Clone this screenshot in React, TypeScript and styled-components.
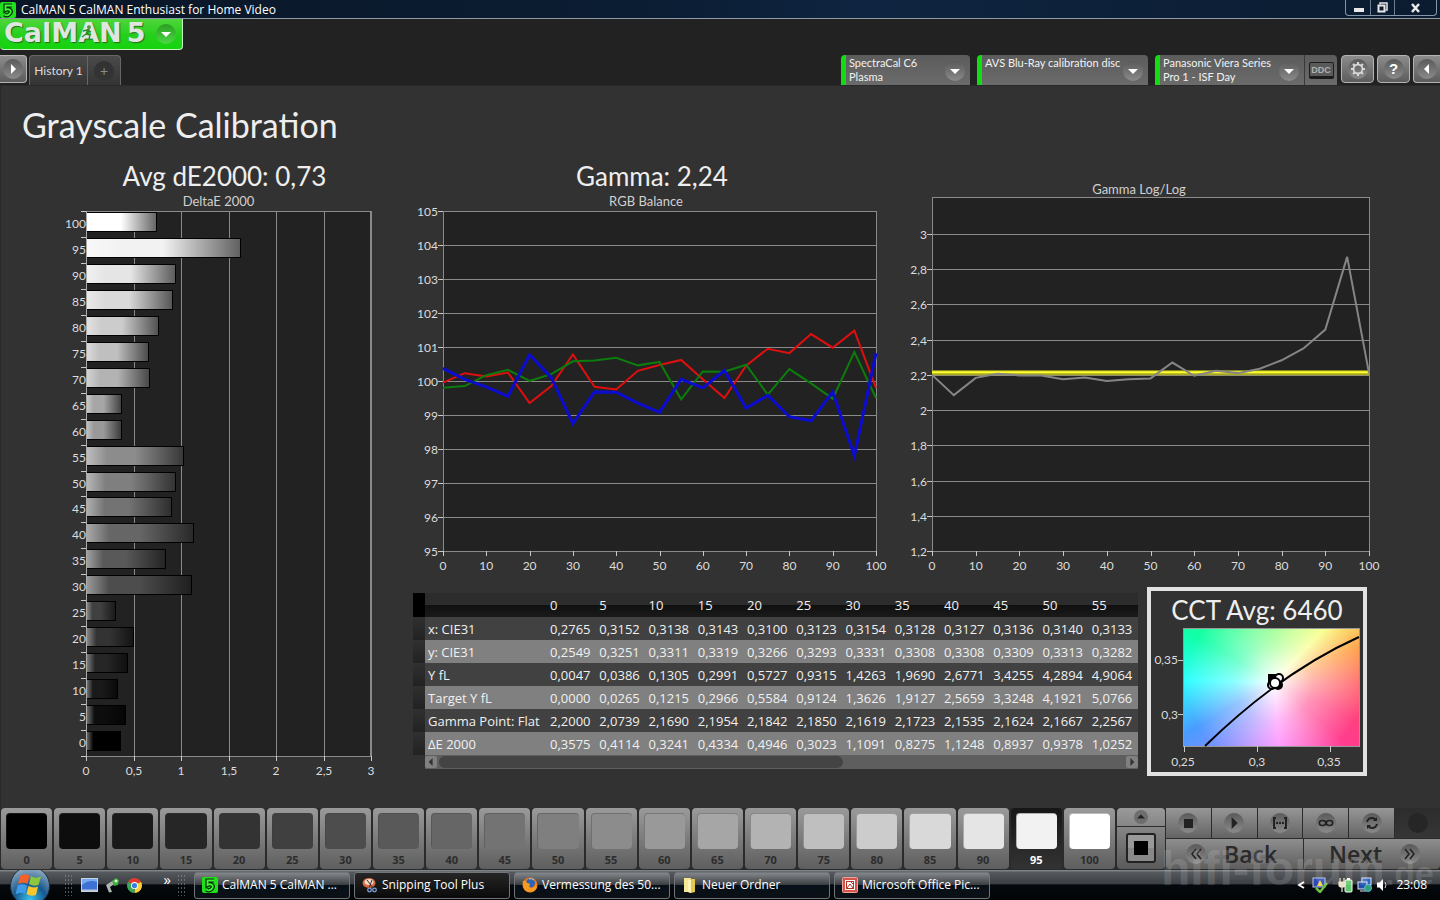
import React from "react";
import styled, { createGlobalStyle } from "styled-components";

const CALIBRI = `Lato, "Open Sans", sans-serif`;
const SEGOE = `"Open Sans", "Noto Sans", sans-serif`;

const GlobalStyle = createGlobalStyle`
  *, *::before, *::after { box-sizing: border-box; }
  body { margin: 0; background: #222; color: #eee; font-family: ${CALIBRI}; }
  button { font: inherit; color: inherit; border: 0; padding: 0; margin: 0; background: none; cursor: pointer; }
`;

/* ---------- data ---------- */

const LEVELS = Array.from({ length: 21 }, (_, i) => i * 5);

const DELTA_E = [
  0.3575, 0.4114, 0.3241, 0.4334, 0.4946, 0.3023, 1.1091, 0.8275, 1.1248, 0.8937, 0.9378,
  1.0252, 0.37, 0.37, 0.665, 0.655, 0.76, 0.9, 0.94, 1.625, 0.735,
];

const RED = [
  99.95, 100.23, 100.13, 100.25, 99.35, 99.85, 100.78, 99.83, 99.75, 100.3, 100.47, 100.62,
  100.05, 99.5, 100.45, 100.95, 100.82, 101.38, 100.98, 101.48, 99.8,
];
const GREEN = [
  99.8, 99.85, 100.17, 100.33, 100, 100.2, 100.58, 100.6, 100.68, 100.46, 100.56, 99.46,
  100.28, 100.27, 100.48, 99.6, 100.35, 99.93, 99.48, 100.85, 99.5,
];
const BLUE = [
  100.37, 100.05, 99.83, 99.55, 100.77, 100.1, 98.75, 99.68, 99.67, 99.35, 99.08, 100.05,
  99.8, 100.31, 99.2, 99.58, 98.95, 98.83, 99.68, 97.8, 100.82,
];
const GAMMA = [
  2.2, 2.085, 2.183, 2.207, 2.197, 2.197, 2.175, 2.185, 2.165, 2.175, 2.18, 2.27, 2.195,
  2.223, 2.21, 2.235, 2.283, 2.35, 2.457, 2.87, 2.21,
];

const TABLE_ROWS: { label: string; values: string[] }[] = [
  { label: "x: CIE31", values: "0,2765 0,3152 0,3138 0,3143 0,3100 0,3123 0,3154 0,3128 0,3127 0,3136 0,3140 0,3133".split(" ") },
  { label: "y: CIE31", values: "0,2549 0,3251 0,3311 0,3319 0,3266 0,3293 0,3331 0,3308 0,3308 0,3309 0,3313 0,3282".split(" ") },
  { label: "Y fL", values: "0,0047 0,0386 0,1305 0,2991 0,5727 0,9315 1,4263 1,9690 2,6771 3,4255 4,2894 4,9064".split(" ") },
  { label: "Target Y fL", values: "0,0000 0,0265 0,1215 0,2966 0,5584 0,9124 1,3626 1,9127 2,5659 3,3248 4,1921 5,0766".split(" ") },
  { label: "Gamma Point: Flat", values: "2,2000 2,0739 2,1690 2,1954 2,1842 2,1850 2,1619 2,1723 2,1535 2,1624 2,1667 2,2567".split(" ") },
  { label: "ΔE 2000", values: "0,3575 0,4114 0,3241 0,4334 0,4946 0,3023 1,1091 0,8275 1,1248 0,8937 0,9378 1,0252".split(" ") },
];

/* ---------- shell ---------- */

const Shell = styled.div`
  position: relative;
  min-height: 100vh;
  display: flex;
  flex-direction: column;
  overflow: hidden;
`;

const TitleBar = styled.header`
  height: 19px;
  display: flex;
  align-items: flex-start;
  justify-content: space-between;
  background: linear-gradient(90deg, #0a1626, #0b1d33 45%, #0e2440 60%, #0b1c30);
  border-bottom: 1px solid #8d9aa6;
`;
const AppName = styled.div`
  display: flex;
  align-items: center;
  gap: 5px;
  font: 12px/20px ${SEGOE};
  color: #fff;
`;
const WindowControls = styled.div`
  display: flex;
  height: 16px;
  margin-right: 3px;
  border: 1px solid #8496a8;
  border-top: 0;
  border-radius: 0 0 4px 4px;
`;
const WindowButton = styled.button`
  display: grid;
  place-items: center;
  width: 24px;
  & + & { border-left: 1px solid #6c7d8f; }
  & + & + & { width: 42px; }
`;

const Header = styled.div`
  height: 66px;
  background: #222;
  display: flex;
  flex-direction: column;
  justify-content: space-between;
`;
const LogoButton = styled.button`
  position: relative;
  display: flex;
  align-items: center;
  gap: 5px;
  align-self: flex-start;
  width: 183px;
  height: 31px;
  padding-left: 4px;
  background: linear-gradient(#50d63c, #24cf1c 55%, #14d40c);
  border: solid #c8f4c4;
  border-width: 0 1px 1px 0;
  border-radius: 0 0 4px 4px;
`;
const LogoText = styled.span`
  font: bold 27px/27px "DejaVu Sans", sans-serif;
  color: #dfe6df;
  text-shadow: 1px 1px 1px #2a6a22;
  padding-bottom: 3px;
`;
const Runner = styled.svg`
  position: absolute;
  left: 80px;
  top: 5px;
`;
const LogoArrow = styled.span`
  display: grid;
  place-items: center;
  width: 20px;
  height: 20px;
  margin-left: auto;
  margin-right: 6px;
  border-radius: 50%;
  background: linear-gradient(#2a9e22, #4cd844);
`;

const HeaderRow = styled.div`
  display: flex;
  align-items: flex-start;
  justify-content: space-between;
  height: 30px;
`;
const TabGroup = styled.div`
  display: flex;
  gap: 2px;
`;
const ToolButton = styled.button<{ $cut?: "left" | "right" }>`
  display: grid;
  place-items: center;
  width: ${(p) => (p.$cut ? 27 : 33)}px;
  height: 28px;
  background: linear-gradient(#8c8c8c, #5c5c5c);
  border: 1px solid #b4b4b4;
  border-left-width: ${(p) => (p.$cut === "left" ? 0 : 1)}px;
  border-right-width: ${(p) => (p.$cut === "right" ? 0 : 1)}px;
  border-radius: ${(p) => (p.$cut === "left" ? "0 4px 4px 0" : p.$cut === "right" ? "4px 0 0 4px" : "4px")};
`;
const Dimple = styled.span<{ $tone?: string; $size?: number }>`
  display: grid;
  place-items: center;
  flex: none;
  width: ${(p) => p.$size ?? 20}px;
  height: ${(p) => p.$size ?? 20}px;
  border-radius: 50%;
  background: ${(p) => p.$tone ?? "linear-gradient(#5a5a5a, #8a8a8a)"};
`;
const Tabs = styled.div`
  display: flex;
  height: 30px;
  width: 92px;
  background: linear-gradient(#4a4a4a, #343434);
  border: 1px solid #666;
  border-bottom: 0;
  border-radius: 4px 4px 0 0;
`;
const Tab = styled.button`
  width: 58px;
  font-size: 12px;
  color: #ddd;
  border-right: 1px solid #666;
`;
const AddTab = styled.button`
  flex: 1;
  display: grid;
  place-items: center;
`;
const Devices = styled.div`
  display: flex;
  align-items: flex-start;
  gap: 3px;
`;
const Device = styled.div<{ $width: number; $gap: number }>`
  display: flex;
  width: ${(p) => p.$width}px;
  height: 30px;
  margin-right: ${(p) => p.$gap}px;
  background: linear-gradient(#5c5c5c, #6b6b6b);
  border-radius: 4px 4px 0 0;
  border-left: 5px solid #12dc12;
  overflow: hidden;
`;
const DeviceButton = styled.button`
  flex: 1;
  display: flex;
  justify-content: space-between;
  align-items: flex-start;
  padding: 1px 5px 0 3px;
  font-size: 11px;
  line-height: 14px;
  text-align: left;
  white-space: pre;
  color: #f2f2f2;
  & > ${Dimple} { margin-top: 5px; }
`;
const DdcButton = styled.button`
  width: 33px;
  display: grid;
  place-items: center;
  border-left: 1px solid #3a3a3a;
`;
const DdcScreen = styled.span`
  width: 25px;
  height: 17px;
  font: bold 9px/14px "Liberation Sans", sans-serif;
  text-align: center;
  color: #b0b0b0;
  background: #5a5a5a;
  border: 1px solid #1c1c1c;
  border-bottom-width: 3px;
  border-radius: 2px;
`;

/* ---------- page ---------- */

const Page = styled.main`
  flex: 1;
  background: #323232;
  border: solid #292929;
  border-width: 1px 0 0 1px;
`;
const PageTitle = styled.h1`
  margin: 0;
  padding: 15px 21px 0;
  height: 74px;
  font-weight: 400;
  font-size: 34px;
  line-height: 48px;
`;
const Columns = styled.div`
  display: grid;
  grid-template-columns: 399fr 988fr 52fr;
`;
const ChartRow = styled.div`
  display: grid;
  grid-template-columns: 490fr 498fr;
  align-items: end;
`;
const Figure = styled.figure`
  margin: 0;
  display: flex;
  flex-direction: column;
`;
const Reading = styled.h2<{ $shift?: number }>`
  margin: 0;
  padding: 0 0 2px ${(p) => p.$shift ?? 0}px;
  font-weight: 400;
  font-size: 26px;
  line-height: 32px;
  text-align: center;
  white-space: nowrap;
`;
const Caption = styled.figcaption<{ $shift?: number }>`
  padding-left: ${(p) => p.$shift ?? 0}px;
  font-size: 13px;
  line-height: 15px;
  text-align: center;
  color: #d0d0d0;
`;
const Chart = styled.svg`
  display: block;
  width: 100%;
  height: auto;
  overflow: visible;
  font-family: ${CALIBRI};
  font-size: 12px;
  fill: #dcdcdc;
`;
const Results = styled.div`
  display: flex;
  align-items: flex-start;
  gap: 9px;
  padding: 10px 21px 0 13px;
`;
const DataPanel = styled.div`
  flex: 1;
  min-width: 0;
  margin-top: 6px;
`;
const DataTable = styled.table`
  width: 100%;
  table-layout: fixed;
  border-collapse: collapse;
  font: 13px/20px ${SEGOE};
  color: #f0f0f0;
  th, td { padding: 0 0 0 3px; text-align: left; font-weight: 400; white-space: nowrap; }
`;
const HeadRow = styled.tr`
  height: 24px;
  background: linear-gradient(#2c2c2c 50%, #101010 50%, #1a1a1a);
  td:first-child { background: #000; }
`;
const BodyRow = styled.tr`
  height: 23px;
  background: #414141;
  &:nth-child(even) { background: #808080; }
  td:first-child { background: linear-gradient(#303030, #222); }
`;
const StripCol = styled.col`width: 12px;`;
const LabelCol = styled.col`width: 122px;`;
const Scroller = styled.div`
  display: flex;
  align-items: center;
  height: 14px;
  margin-left: 12px;
  background: #5e5e5e;
`;
const ScrollButton = styled.button`
  width: 12px;
  height: 12px;
  display: grid;
  place-items: center;
  background: #808080;
  border-radius: 2px;
`;
const ScrollTrack = styled.div`
  flex: 1;
  padding: 0 2px;
`;
const ScrollThumb = styled.div`
  width: 59%;
  height: 12px;
  border-radius: 6px;
  background: #444;
`;
const CctPanel = styled.figure`
  margin: 0;
  flex: 0 0 220px;
  height: 189px;
  border: 4px solid #e2e2e2;
`;
const CctReading = styled(Reading)`
  padding-top: 3px;
  height: 36px;
`;
const Chromaticity = styled.div`
  height: 100%;
  background:
    radial-gradient(circle at 52% 46%, #fff, rgba(255, 255, 255, 0.45) 35%, rgba(255, 255, 255, 0) 80%),
    conic-gradient(from 0deg at 52% 46%, #80ff70, #f8ff80 43deg, #ffa850 66deg, #ff7070 90deg, #ff4080 115deg, #ff3c8c 130deg,
      #ff80ff 176deg, #8a8aff 215deg, #4a9cff 240deg, #30ffff 271deg, #10ffa8 300deg, #80ff70 360deg);
`;

/* ---------- pattern strip ---------- */

const PatternBar = styled.section`
  display: flex;
  height: 62px;
  background: #2b2b2b;
  padding: 0 0 1px 1px;
`;
const Swatches = styled.div`
  flex: 1;
  display: flex;
  gap: 2px;
`;
const SwatchButton = styled.button<{ $active?: boolean }>`
  flex: 1 1 0;
  min-width: 0;
  display: flex;
  flex-direction: column;
  padding: 5px 5px 0;
  border-radius: 4px;
  background: ${(p) => (p.$active ? "linear-gradient(#161616, #333)" : "linear-gradient(#9a9a9a, #5e5e5e)")};
  color: ${(p) => (p.$active ? "#fff" : "#2c2c2c")};
  font: bold 11px/14px ${SEGOE};
  text-align: center;
`;
const Chip = styled.span<{ $level: number }>`
  height: 36px;
  margin-bottom: 4px;
  border-radius: 4px;
  border: solid rgba(60, 60, 60, 0.35);
  border-width: 1px 0 0 1px;
  background: ${(p) => `rgb(${p.$level}, ${p.$level}, ${p.$level})`};
`;
const ModeColumn = styled.div`
  width: 48px;
  margin: 0 1px 0 2px;
  display: flex;
  flex-direction: column;
  gap: 1px;
`;
const ModeButton = styled.button<{ $tall?: boolean }>`
  display: grid;
  place-items: center;
  height: ${(p) => (p.$tall ? 42 : 18)}px;
  background: ${(p) => (p.$tall ? "linear-gradient(#858585, #5a5a5a)" : "linear-gradient(#9a9a9a, #868686)")};
  border-radius: ${(p) => (p.$tall ? "0 0 4px 4px" : "4px 4px 0 0")};
`;
const PatternBox = styled.span`
  width: 30px;
  height: 30px;
  border: 2px solid #222;
  border-radius: 3px;
  background: linear-gradient(#999 50%, #888 50%);
  display: grid;
  place-items: center;
  &::after { content: ""; width: 14px; height: 14px; background: #000; }
`;
const Transport = styled.div`
  width: 274px;
  display: grid;
  grid-template-rows: 30px 30px;
  gap: 1px;
`;
const TransportRow = styled.div<{ $count: number }>`
  display: grid;
  grid-template-columns: repeat(${(p) => p.$count}, 1fr);
  gap: 1px;
`;
const TransportButton = styled.button`
  display: flex;
  align-items: center;
  justify-content: center;
  background: linear-gradient(#969696, #646464);
  &:disabled { background: linear-gradient(#2c2c2c, #363636); }
`;
const StepButton = styled(TransportButton)<{ $forward?: boolean }>`
  gap: 18px;
  padding: 0 20px;
  justify-content: ${(p) => (p.$forward ? "flex-end" : "flex-start")};
  background: linear-gradient(#8e8e8e, #5e5e5e);
  border-radius: ${(p) => (p.$forward ? "0 0 4px 0" : "0 0 0 4px")};
  color: #2a2a2a;
  font: 600 23px/30px ${SEGOE};
`;

/* ---------- taskbar ---------- */

const Taskbar = styled.footer`
  display: flex;
  align-items: center;
  height: 30px;
  background: linear-gradient(#8a8d90, #55585c 8%, #3c4044 45%, #05090d 50%, #020406);
  color: #fff;
  font: 12px/16px ${SEGOE};
`;
const StartButton = styled.button`
  width: 42px;
  height: 30px;
  margin: 0 13px 0 9px;
  overflow: hidden;
`;
const Grip = styled.span`
  width: 9px;
  height: 22px;
  background: radial-gradient(circle, #8a8f94 1px, transparent 1px) 0 0 / 3px 4px;
  opacity: 0.6;
`;
const QuickLaunch = styled.div`
  display: flex;
  align-items: center;
  gap: 7px;
  width: 96px;
  margin-left: 8px;
`;
const More = styled.button`
  margin: -12px 6px 0 auto;
  font-size: 15px;
`;
const Tasks = styled.nav`
  display: flex;
  gap: 4px;
  margin-left: 8px;
`;
const TaskButton = styled.button<{ $active?: boolean }>`
  display: flex;
  align-items: center;
  gap: 4px;
  width: 156px;
  height: 27px;
  padding: 0 7px;
  border: 1px solid #70757a;
  border-radius: 3px;
  background: ${(p) => (p.$active ? "linear-gradient(#262626, #0a0a0a)" : "linear-gradient(#83878b, #3c4043 46%, #07101a 50%, #0b1014)")};
  white-space: nowrap;
`;
const Tray = styled.div`
  display: flex;
  align-items: center;
  gap: 4px;
  margin-left: auto;
  padding-right: 13px;
`;
const TrayGroup = styled.div`
  display: flex;
  align-items: center;
  gap: 7px;
  margin-right: 6px;
`;
const Clock = styled.time`margin-left: 3px;`;

const Watermark = styled.div`
  position: absolute;
  right: 6px;
  bottom: 0;
  font: bold 48px/54px "Liberation Sans", sans-serif;
  color: rgba(255, 255, 255, 0.15);
  pointer-events: none;
  small { font-size: 34px; }
`;

/* ---------- small drawings ---------- */

const FiveIcon = ({ size = 16 }: { size?: number }) => (
  <svg width={size} height={size} viewBox="0 0 16 16">
    <rect x="0" y="0" width="16" height="16" rx="2" fill="#1fe01a" />
    <path d="M12 3.500H5.500V8Q8 6.500 10 8T9.500 12 4.500 12.500" fill="none" stroke="#052a05" strokeWidth="4.200" />
    <path d="M12 3.500H5.500V8Q8 6.500 10 8T9.500 12 4.500 12.500" fill="none" stroke="#3cf436" strokeWidth="1.800" />
  </svg>
);
const Triangle = ({ dir, size = 10, color = "#fff" }: { dir: "up" | "down" | "left" | "right"; size?: number; color?: string }) => {
  const d = { up: "M0 7L5 2l5 5z", down: "M0 3h10L5 8z", left: "M7 0v10L2 5z", right: "M3 0v10l5-5z" }[dir];
  return (
    <svg width={size} height={size} viewBox="0 0 10 10">
      <path d={d} fill={color} />
    </svg>
  );
};
const Gear = () => (
  <svg width="16" height="16" viewBox="0 0 16 16" fill="none" stroke="#d8d8d8">
    <circle cx="8" cy="8" r="4.500" strokeWidth="1.800" />
    <path
      d="M8 1v2.500M8 12.500V15M1 8h2.500M12.500 8H15M3 3l1.800 1.800M11.200 11.200L13 13M13 3l-1.800 1.800M4.800 11.200L3 13"
      strokeWidth="2"
    />
  </svg>
);
const HelpMark = styled.span`
  font: bold 15px/18px "Liberation Sans", sans-serif;
  color: #fff;
`;
const PlusMark = styled.span`
  font-size: 14px;
  line-height: 16px;
  color: #8a8a8a;
`;

const Orb = () => (
  <svg width="42" height="30" viewBox="0 0 42 30">
    <defs>
      <radialGradient id="orb" cx="50%" cy="85%" r="80%">
        <stop offset="0" stopColor="#39c3ee" />
        <stop offset="0.5" stopColor="#17588f" />
        <stop offset="1" stopColor="#8fa9bf" />
      </radialGradient>
    </defs>
    <circle cx="21" cy="16" r="19.500" fill="url(#orb)" stroke="#1a2c3c" />
    <path d="M11 6q5-3 9.500-.5L18.500 14q-4.500-2.500-9.500 0z" fill="#f0622a" />
    <path d="M22 6q4.500 3 10 .5L29.500 15q-5 2-9.500-1z" fill="#8cc63e" />
    <path d="M8.500 15.500q5-2.500 9.500 0L16 24q-4.500-2.500-9.500 .5z" fill="#3f9be8" />
    <path d="M19.500 16q4.500 2.500 9.500.5L27 25q-5 2-9.500-1z" fill="#fbc62c" />
  </svg>
);
const DesktopIcon = () => (
  <svg width="17" height="16" viewBox="0 0 17 16">
    <rect x="0.500" y="1.500" width="16" height="13" fill="#3d72d4" stroke="#c7d3e2" />
    <path d="M1 8Q8 2 16 5V2H1z" fill="#78a8f0" />
    <path d="M1 12.500h15V14H1z" fill="#b9c8d8" />
  </svg>
);
const SwitchIcon = () => (
  <svg width="15" height="16" viewBox="0 0 15 16">
    <path d="M1 8l8-5 2 3-6 4 2 5-3 .500z" fill="#aeb6b2" />
    <path d="M7 4l4-3 3 2-1 5-4 1z" fill="#3fae3c" />
    <circle cx="11" cy="4" r="1.500" fill="#d6f5c9" />
  </svg>
);
const ChromeIcon = () => (
  <svg width="15" height="15" viewBox="0 0 16 16">
    <path d="M8 8L1.100 4A8 8 0 0 1 14.900 4z" fill="#e33b2e" />
    <path d="M8 8l6.900-4A8 8 0 0 1 8 16z" fill="#fbd13b" />
    <path d="M8 8v8A8 8 0 0 1 1.100 4z" fill="#3aa757" />
    <circle cx="8" cy="8" r="3.800" fill="#fff" />
    <circle cx="8" cy="8" r="2.800" fill="#3a7de0" />
  </svg>
);
const SnipIcon = () => (
  <svg width="16" height="16" viewBox="0 0 16 16">
    <ellipse cx="7" cy="6" rx="6.500" ry="5" fill="#d8693f" />
    <ellipse cx="7" cy="5" rx="4.500" ry="3" fill="#f3dccb" />
    <path d="M5 3l6 8M10 3L7 11" stroke="#333" />
    <circle cx="7.500" cy="13" r="1.800" fill="none" stroke="#7fa0d8" strokeWidth="1.300" />
    <circle cx="12.500" cy="13" r="1.800" fill="none" stroke="#7fa0d8" strokeWidth="1.300" />
  </svg>
);
const FirefoxIcon = () => (
  <svg width="16" height="16" viewBox="0 0 16 16">
    <circle cx="8" cy="8" r="7.500" fill="#ee7a17" />
    <circle cx="8.500" cy="6" r="4.500" fill="#2d64b4" />
    <path d="M1 4q3-1 4 2 3 0 3 2-2 2 1 3 4 0 5-4 2 5-2 7-5 3-9-1-3-4-2-9z" fill="#f79a23" />
    <path d="M7 2q3-1 5 1" stroke="#9fd2f3" fill="none" />
  </svg>
);
const FolderIcon = () => (
  <svg width="16" height="16" viewBox="0 0 16 16">
    <path d="M2 1h7v14H2z" fill="#f5e795" />
    <path d="M6 2h7v13l-4 1-3-1z" fill="#e3c84f" />
    <path d="M6 2l3 1v13l-3-1z" fill="#fbf3b8" />
  </svg>
);
const OfficeIcon = () => (
  <svg width="16" height="16" viewBox="0 0 16 16">
    <rect x="0.500" y="0.500" width="15" height="15" rx="1" fill="#d4564a" stroke="#eba59c" />
    <rect x="3" y="3" width="10" height="10" fill="#fff" />
    <rect x="4.500" y="4.500" width="7" height="7" fill="none" stroke="#b03328" />
    <path d="M5 11l3-4 3 4M9 5l2 2" stroke="#b03328" fill="none" />
  </svg>
);
const UpdateIcon = () => (
  <svg width="16" height="16" viewBox="0 0 16 16">
    <rect x="1" y="1" width="12" height="9" fill="#2b47b8" stroke="#b8c8e8" />
    <path d="M5 9l3-6 3 6z" fill="#f4d848" />
    <path d="M4 11l4 4 7-9" stroke="#6cc04a" strokeWidth="2.500" fill="none" />
  </svg>
);
const PowerIcon = () => (
  <svg width="15" height="16" viewBox="0 0 15 16">
    <rect x="7" y="3" width="7" height="12" rx="1" fill="#5fc46a" stroke="#fff" />
    <rect x="9" y="1" width="3" height="2" fill="#fff" />
    <path d="M1 5h6v3q0 2-3 2t-3-2zM2 1v4M6 1v4M4 10v5" fill="#e6e0c8" stroke="#efe9d4" strokeWidth="1.200" />
  </svg>
);
const NetworkIcon = () => (
  <svg width="15" height="16" viewBox="0 0 15 16">
    <rect x="5" y="1" width="9" height="7" fill="#2d65c0" stroke="#dfe8f4" />
    <rect x="1" y="5" width="9" height="7" fill="#244fa8" stroke="#dfe8f4" />
    <path d="M3 14h6" stroke="#dfe8f4" />
    <circle cx="11" cy="11" r="3.500" fill="#2fa36c" stroke="#58b4f0" />
  </svg>
);
const SpeakerIcon = () => (
  <svg width="13" height="16" viewBox="0 0 13 16">
    <path d="M1 5.500h2.500L7 2v12L3.500 10.500H1z" fill="#fff" />
    <path d="M9 5q2 3 0 6" stroke="#cfd6dc" fill="none" />
  </svg>
);

/* ---------- charts ---------- */

const GRID = "#8a8a8a";
const TICK = "#c8c8c8";

function DeltaChart() {
  const left = 85, right = 370, top = 2, bottom = 547;
  const pitch = (bottom - top) / 21;
  const x = (v: number) => Math.round(left + (v * (right - left)) / 3);
  const rows = [...LEVELS].reverse();
  return (
    <Chart viewBox="0 0 399 576" role="img" aria-label="DeltaE 2000 by level">
      <defs>
        {rows.map((level) => {
          const base = Math.round(level * 2.55);
          const light = Math.round(base + (255 - base) * 0.45);
          const dark = Math.round(base * 0.4);
          const rgb = (c: number) => `rgb(${c},${c},${c})`;
          return (
            <linearGradient id={`bar${level}`} key={level}>
              <stop offset="0" stopColor={rgb(light)} />
              <stop offset="0.220" stopColor={rgb(base)} />
              <stop offset="0.500" stopColor={rgb(base)} />
              <stop offset="1" stopColor={rgb(dark)} />
            </linearGradient>
          );
        })}
      </defs>
      <rect x={left} y={top} width={right - left} height={bottom - top} fill="#222" />
      <g stroke={GRID} shapeRendering="crispEdges">
        {[0.5, 1, 1.5, 2, 2.5].map((v) => (
          <line key={v} x1={x(v)} x2={x(v)} y1={top} y2={bottom} />
        ))}
        <rect x={left} y={top} width={right - left} height={bottom - top} fill="none" />
        <line x1={right} x2={right} y1={top} y2={bottom} strokeWidth="2" />
      </g>
      <g stroke={TICK} shapeRendering="crispEdges">
        {Array.from({ length: 22 }, (_, i) => (
          <line key={i} x1={left - 5} x2={left} y1={Math.round(top + i * pitch)} y2={Math.round(top + i * pitch)} />
        ))}
        {[0, 0.5, 1, 1.5, 2, 2.5, 3].map((v) => (
          <line key={v} x1={x(v)} x2={x(v)} y1={bottom} y2={bottom + 5} />
        ))}
      </g>
      {rows.map((level, i) => {
        const y = Math.round(top + i * pitch);
        return (
          <g key={level}>
            <rect
              x={left}
              y={y + 1}
              width={x(DELTA_E[level / 5]) - left}
              height={19}
              fill={`url(#bar${level})`}
              stroke="#000"
              shapeRendering="crispEdges"
            />
            <text x={left} y={y + 17} textAnchor="end">{level}</text>
          </g>
        );
      })}
      <line x1={left} x2={left} y1={top} y2={bottom} stroke="#aaa" shapeRendering="crispEdges" />
      {["0", "0,5", "1", "1,5", "2", "2,5", "3"].map((label, i) => (
        <text key={label} x={x(i / 2)} y={bottom + 19} textAnchor="middle">{label}</text>
      ))}
    </Chart>
  );
}

type Series = { color: string; width: number; values: number[] };

function LineChart(props: {
  name: string;
  width: number;
  height: number;
  plot: { left: number; right: number; top: number; bottom: number };
  min: number;
  max: number;
  ticks: number[];
  series: Series[];
}) {
  const { left, right, top, bottom } = props.plot;
  const x = (v: number) => left + (v * (right - left)) / 100;
  const y = (v: number) => bottom - ((v - props.min) * (bottom - top)) / (props.max - props.min);
  return (
    <Chart viewBox={`0 0 ${props.width} ${props.height}`} role="img" aria-label={props.name}>
      <rect x={left} y={top} width={right - left} height={bottom - top} fill="#222" />
      <g stroke={GRID} shapeRendering="crispEdges">
        {props.ticks.map((v) => (
          <line key={v} x1={left} x2={right} y1={Math.round(y(v))} y2={Math.round(y(v))} />
        ))}
        <rect x={left} y={top} width={right - left} height={bottom - top} fill="none" />
      </g>
      <g stroke={TICK} shapeRendering="crispEdges">
        {props.ticks.map((v) => (
          <line key={v} x1={left - 5} x2={left} y1={Math.round(y(v))} y2={Math.round(y(v))} />
        ))}
        {Array.from({ length: 11 }, (_, i) => (
          <line key={i} x1={Math.round(x(i * 10))} x2={Math.round(x(i * 10))} y1={bottom} y2={bottom + 5} />
        ))}
      </g>
      {props.series.map((s) => (
        <polyline
          key={s.color}
          points={s.values.map((v, i) => `${x((i * 100) / (s.values.length - 1))},${y(v)}`).join(" ")}
          fill="none"
          stroke={s.color}
          strokeWidth={s.width}
        />
      ))}
      {props.ticks.map((v) => (
        <text key={v} x={left - 5} y={Math.round(y(v)) + 5} textAnchor="end">
          {String(v).replace(".", ",")}
        </text>
      ))}
      {Array.from({ length: 11 }, (_, i) => (
        <text key={i} x={x(i * 10)} y={bottom + 19} textAnchor="middle">{i * 10}</text>
      ))}
    </Chart>
  );
}

function CctChart() {
  return (
    <Chart viewBox="0 0 212 145" role="img" aria-label="Chromaticity">
      <foreignObject x="32" y="1" width="176" height="118">
        <Chromaticity />
      </foreignObject>
      <rect x="32" y="1" width="176" height="118" fill="none" stroke="#999" shapeRendering="crispEdges" />
      <g stroke={TICK} shapeRendering="crispEdges">
        <path d="M27 33h5M27 87h5M33 119v6M106 119v6M179 119v6" />
      </g>
      <path d="M54 119Q130 45 208 10" fill="none" stroke="#000" strokeWidth="2" />
      <path d="M118 48h9v12h-9z" fill="#000" stroke="#000" strokeWidth="2" />
      <g fill="#fff" stroke="#000" strokeWidth="2">
        <circle cx="127" cy="58" r="4" fill="#000" />
        <circle cx="121" cy="58" r="4" />
        <circle cx="128" cy="51" r="4" />
        <circle cx="124" cy="56" r="5" />
      </g>
      <text x="27" y="37" textAnchor="end">0,35</text>
      <text x="27" y="92" textAnchor="end">0,3</text>
      <text x="32" y="139" textAnchor="middle">0,25</text>
      <text x="106" y="139" textAnchor="middle">0,3</text>
      <text x="178" y="139" textAnchor="middle">0,35</text>
    </Chart>
  );
}

/* ---------- app ---------- */

const TASKS = [
  { label: "CalMAN 5 CalMAN ...", icon: <FiveIcon /> },
  { label: "Snipping Tool Plus", icon: <SnipIcon />, active: true },
  { label: "Vermessung des 50...", icon: <FirefoxIcon /> },
  { label: "Neuer Ordner", icon: <FolderIcon /> },
  { label: "Microsoft Office Pic...", icon: <OfficeIcon /> },
];

export default function App() {
  return (
    <Shell>
      <GlobalStyle />
      <TitleBar>
        <AppName>
          <FiveIcon />
          CalMAN 5 CalMAN Enthusiast for Home Video
        </AppName>
        <WindowControls>
          <WindowButton aria-label="Minimize">
            <svg width="11" height="10" viewBox="0 0 11 10"><rect x="1" y="5" width="10" height="4" fill="#e8e8e8" /></svg>
          </WindowButton>
          <WindowButton aria-label="Restore">
            <svg width="11" height="11" viewBox="0 0 11 11" fill="none" stroke="#e8e8e8">
              <path d="M3 2.500V1h7v7H8.500" strokeWidth="1.500" />
              <rect x="1.500" y="3.500" width="6" height="6" strokeWidth="2" />
            </svg>
          </WindowButton>
          <WindowButton aria-label="Close">
            <svg width="11" height="10" viewBox="0 0 11 10"><path d="M2 1l7 8M9 1L2 9" stroke="#e8e8e8" strokeWidth="2.500" /></svg>
          </WindowButton>
        </WindowControls>
      </TitleBar>

      <Header>
        <LogoButton>
          <LogoText>CalMAN</LogoText>
          <LogoText>5</LogoText>
          <Runner width="14" height="16" viewBox="0 0 14 16" fill="none" stroke="#2f8a25" strokeWidth="1.300">
            <circle cx="9" cy="3" r="1.200" />
            <path d="M8 5l-2 5 4 1-1 4M6 10l-4 3M3 7l4-1 4 2" />
          </Runner>
          <LogoArrow><Triangle dir="down" /></LogoArrow>
        </LogoButton>
        <HeaderRow>
          <TabGroup>
            <ToolButton $cut="left" aria-label="Open panel">
              <Dimple><Triangle dir="right" /></Dimple>
            </ToolButton>
            <Tabs>
              <Tab>History 1</Tab>
              <AddTab aria-label="Add tab">
                <Dimple $tone="#333"><PlusMark>+</PlusMark></Dimple>
              </AddTab>
            </Tabs>
          </TabGroup>
          <Devices>
            <Device $width={129} $gap={4}>
              <DeviceButton>{"SpectraCal C6\nPlasma"}<Dimple><Triangle dir="down" /></Dimple></DeviceButton>
            </Device>
            <Device $width={171} $gap={4}>
              <DeviceButton>AVS Blu-Ray calibration disc<Dimple><Triangle dir="down" /></Dimple></DeviceButton>
            </Device>
            <Device $width={182} $gap={1}>
              <DeviceButton>{"Panasonic Viera Series\nPro 1 - ISF Day"}<Dimple><Triangle dir="down" /></Dimple></DeviceButton>
              <DdcButton><DdcScreen>DDC</DdcScreen></DdcButton>
            </Device>
            <ToolButton aria-label="Settings"><Dimple><Gear /></Dimple></ToolButton>
            <ToolButton aria-label="Help"><Dimple><HelpMark>?</HelpMark></Dimple></ToolButton>
            <ToolButton $cut="right" aria-label="Collapse"><Dimple><Triangle dir="left" /></Dimple></ToolButton>
          </Devices>
        </HeaderRow>
      </Header>

      <Page>
        <PageTitle>Grayscale Calibration</PageTitle>
        <Columns>
          <Figure>
            <Reading $shift={48}>Avg dE2000: 0,73</Reading>
            <Caption $shift={36}>DeltaE 2000</Caption>
            <DeltaChart />
          </Figure>
          <div>
            <ChartRow>
              <Figure>
                <Reading $shift={14}>Gamma: 2,24</Reading>
                <Caption $shift={2}>RGB Balance</Caption>
                <LineChart
                  name="RGB Balance"
                  width={490}
                  height={368}
                  plot={{ left: 43, right: 476, top: 2, bottom: 342 }}
                  min={95}
                  max={105}
                  ticks={[95, 96, 97, 98, 99, 100, 101, 102, 103, 104, 105]}
                  series={[
                    { color: "#e00f0f", width: 2, values: RED },
                    { color: "#0c7c0c", width: 2, values: GREEN },
                    { color: "#0c0cd0", width: 3, values: BLUE },
                  ]}
                />
              </Figure>
              <Figure>
                <Caption>Gamma Log/Log</Caption>
                <LineChart
                  name="Gamma Log/Log"
                  width={498}
                  height={380}
                  plot={{ left: 42, right: 479, top: 0, bottom: 354 }}
                  min={1.2}
                  max={3.21}
                  ticks={[1.2, 1.4, 1.6, 1.8, 2, 2.2, 2.4, 2.6, 2.8, 3]}
                  series={[
                    { color: "#a8a820", width: 5, values: [2.212, 2.212] },
                    { color: "#ffff30", width: 2, values: [2.215, 2.215] },
                    { color: "#858585", width: 2, values: GAMMA },
                  ]}
                />
              </Figure>
            </ChartRow>
            <Results>
              <DataPanel>
                <DataTable>
                  <colgroup>
                    <StripCol />
                    <LabelCol />
                    {LEVELS.slice(0, 12).map((l) => <col key={l} />)}
                  </colgroup>
                  <thead>
                    <HeadRow>
                      <td />
                      <td />
                      {LEVELS.slice(0, 12).map((l) => <th key={l} scope="col">{l}</th>)}
                    </HeadRow>
                  </thead>
                  <tbody>
                    {TABLE_ROWS.map((row) => (
                      <BodyRow key={row.label}>
                        <td />
                        <th scope="row">{row.label}</th>
                        {row.values.map((v, i) => <td key={i}>{v}</td>)}
                      </BodyRow>
                    ))}
                  </tbody>
                </DataTable>
                <Scroller>
                  <ScrollButton aria-label="Scroll left"><Triangle dir="left" size={8} color="#333" /></ScrollButton>
                  <ScrollTrack><ScrollThumb /></ScrollTrack>
                  <ScrollButton aria-label="Scroll right"><Triangle dir="right" size={8} color="#333" /></ScrollButton>
                </Scroller>
              </DataPanel>
              <CctPanel>
                <CctReading>CCT Avg: 6460</CctReading>
                <CctChart />
              </CctPanel>
            </Results>
          </div>
        </Columns>
      </Page>

      <PatternBar>
        <Swatches>
          {LEVELS.map((level) => (
            <SwatchButton key={level} $active={level === 95}>
              <Chip $level={Math.round(level * 2.55)} />
              {level}
            </SwatchButton>
          ))}
        </Swatches>
        <ModeColumn>
          <ModeButton aria-label="Expand">
            <Dimple $size={14} $tone="#6e6e6e"><Triangle dir="up" size={8} color="#222" /></Dimple>
          </ModeButton>
          <ModeButton $tall aria-label="Window pattern"><PatternBox /></ModeButton>
        </ModeColumn>
        <Transport>
          <TransportRow $count={6}>
            <TransportButton aria-label="Stop">
              <Dimple>
                <svg width="9" height="9" viewBox="0 0 9 9"><rect width="9" height="9" fill="#222" /></svg>
              </Dimple>
            </TransportButton>
            <TransportButton aria-label="Play"><Dimple><Triangle dir="right" size={12} color="#222" /></Dimple></TransportButton>
            <TransportButton aria-label="Read series">
              <Dimple>
                <svg width="16" height="12" viewBox="0 0 16 12" fill="none" stroke="#222" strokeWidth="2">
                  <path d="M4 1H2v10h2M12 1h2v10h-2" />
                  <path d="M4 6h2M7 6h2M10 6h2" />
                </svg>
              </Dimple>
            </TransportButton>
            <TransportButton aria-label="Continuous">
              <Dimple>
                <svg width="16" height="8" viewBox="0 0 16 8" fill="none" stroke="#222" strokeWidth="1.600">
                  <ellipse cx="4.500" cy="4" rx="3.200" ry="2.500" />
                  <ellipse cx="11.500" cy="4" rx="3.200" ry="2.500" />
                </svg>
              </Dimple>
            </TransportButton>
            <TransportButton aria-label="Refresh">
              <Dimple>
                <svg width="14" height="14" viewBox="0 0 14 14" fill="none" stroke="#222" strokeWidth="2">
                  <path d="M2 6q1-4 5-4 2 0 4 2M12 8q-1 4-5 4-2 0-4-2" />
                  <path d="M12 1v4H8zM2 13V9h4z" fill="#222" stroke="none" />
                </svg>
              </Dimple>
            </TransportButton>
            <TransportButton disabled aria-label="Record"><Dimple $tone="#262626" /></TransportButton>
          </TransportRow>
          <TransportRow $count={2}>
            <StepButton>
              <Dimple>
                <svg width="12" height="12" viewBox="0 0 12 12" fill="none" stroke="#222" strokeWidth="1.500"><path d="M6 1L2 6l4 5M11 1L7 6l4 5" /></svg>
              </Dimple>
              Back
            </StepButton>
            <StepButton $forward>
              Next
              <Dimple>
                <svg width="12" height="12" viewBox="0 0 12 12" fill="none" stroke="#222" strokeWidth="1.500"><path d="M1 1l4 5-4 5M6 1l4 5-4 5" /></svg>
              </Dimple>
            </StepButton>
          </TransportRow>
        </Transport>
      </PatternBar>

      <Taskbar>
        <StartButton aria-label="Start"><Orb /></StartButton>
        <Grip />
        <QuickLaunch>
          <DesktopIcon />
          <SwitchIcon />
          <ChromeIcon />
          <More>»</More>
        </QuickLaunch>
        <Grip />
        <Tasks>
          {TASKS.map((t) => (
            <TaskButton key={t.label} $active={t.active}>
              {t.icon}
              {t.label}
            </TaskButton>
          ))}
        </Tasks>
        <Tray>
          <TrayGroup>
            <svg width="8" height="8" viewBox="0 0 8 8"><path d="M7 1L2 4l5 3" fill="none" stroke="#fff" strokeWidth="1.800" /></svg>
            <UpdateIcon />
          </TrayGroup>
          <PowerIcon />
          <NetworkIcon />
          <SpeakerIcon />
          <Clock>23:08</Clock>
        </Tray>
      </Taskbar>
      <Watermark>hifi-forum<small>.de</small></Watermark>
    </Shell>
  );
}
